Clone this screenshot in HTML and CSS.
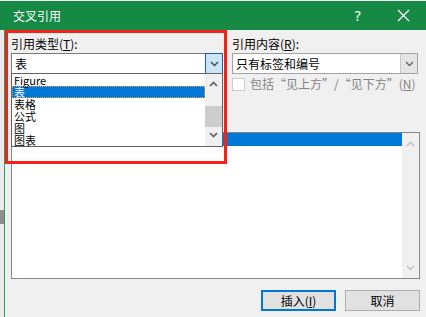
FILE: index.html
```html
<!DOCTYPE html>
<html lang="zh-CN">
<head>
    <meta charset="UTF-8">
    <meta name="viewport" content="width=device-width, initial-scale=1.0">
    <title>交叉引用</title>
    <link rel="stylesheet" href="styles.css">
</head>
<body>
    <div class="window">
        <div class="topline"></div>
        <div class="titlebar">
            <span class="title">交叉引用</span>
            <span class="help">?</span>
            <span class="close">
                <svg width="13" height="13" viewBox="0 0 13 13"><path d="M1 1L12 12M12 1L1 12" stroke="#fff" stroke-width="1.3" fill="none"/></svg>
            </span>
        </div>

        <div class="frame">
            <div class="sheet-edge"><div class="sheet-thumb"></div></div>

            <div class="dialog">
                <div class="columns">
                    <div class="col col-left">
                        <div class="field-label">引用类型(<u>T</u>):</div>
                        <div class="combo combo-focus">
                            <div class="combo-value">表</div>
                            <div class="combo-btn">
                                <svg width="9" height="6" viewBox="0 0 9 6"><path d="M1 1L4.5 4.5L8 1" stroke="#444" stroke-width="1.3" fill="none"/></svg>
                            </div>

                            <div class="dropdown">
                                <div class="drop-rows">
                                    <div class="drop-row">Figure</div>
                                    <div class="drop-row selected">表</div>
                                    <div class="drop-row">表格</div>
                                    <div class="drop-row">公式</div>
                                    <div class="drop-row">图</div>
                                    <div class="drop-row">图表</div>
                                </div>
                                <div class="drop-scroll">
                                    <svg class="arrow-up" width="9" height="6" viewBox="0 0 9 6"><path d="M1 5L4.5 1.5L8 5" stroke="#606060" stroke-width="1.6" fill="none"/></svg>
                                    <div class="drop-thumb"></div>
                                    <svg class="arrow-down" width="9" height="6" viewBox="0 0 9 6"><path d="M1 1L4.5 4.5L8 1" stroke="#606060" stroke-width="1.6" fill="none"/></svg>
                                </div>
                            </div>
                        </div>
                    </div>

                    <div class="col col-right">
                        <div class="field-label">引用内容(<u>R</u>):</div>
                        <div class="combo">
                            <div class="combo-value">只有标签和编号</div>
                            <div class="combo-btn combo-btn-plain">
                                <svg width="9" height="6" viewBox="0 0 9 6"><path d="M1 1L4.5 4.5L8 1" stroke="#606060" stroke-width="1.3" fill="none"/></svg>
                            </div>
                        </div>
                        <div class="check-row">
                            <span class="checkbox"></span>
                            <span class="check-label">包括“见上方”/“见下方”(<u>N</u>)</span>
                        </div>
                    </div>
                </div>

                <div class="ref-list">
                    <div class="ref-rows">
                        <div class="ref-row selected"></div>
                    </div>
                    <div class="ref-scroll">
                        <svg width="9" height="6" viewBox="0 0 9 6"><path d="M1 5L4.5 1.5L8 5" stroke="#c4c4c4" stroke-width="1.6" fill="none"/></svg>
                        <svg width="9" height="6" viewBox="0 0 9 6"><path d="M1 1L4.5 4.5L8 1" stroke="#c4c4c4" stroke-width="1.6" fill="none"/></svg>
                    </div>
                </div>

                <div class="buttons">
                    <button class="btn btn-default">插入(<u>I</u>)</button>
                    <button class="btn">取消</button>
                </div>
            </div>

            <div class="highlight"></div>
        </div>
    </div>
</body>
</html>
```

FILE: styles.css
```css
* {
    box-sizing: border-box;
}

body {
    margin: 0;
    background-color: #f0f0f0;
    font-family: "Noto Sans CJK SC", "Liberation Sans", sans-serif;
    font-size: 12px;
    color: #000;
}

.window {
    width: 426px;
    height: 317px;
    overflow: hidden;
    display: flex;
    flex-direction: column;
}

.topline {
    height: 1px;
    background-color: #f4f4f4;
}

.titlebar {
    height: 29px;
    display: flex;
    align-items: center;
    background-color: #168a45;
    color: #fff;
    padding-left: 13px;
}

.title {
    flex: 1;
    font-size: 12px;
    line-height: 14px;
}

.help {
    width: 12px;
    margin-right: 31px;
    font-family: "DejaVu Sans", sans-serif;
    font-size: 14px;
    line-height: 14px;
}

.close {
    display: flex;
    width: 13px;
    margin-right: 16px;
}

.frame {
    flex: 1;
    display: flex;
    position: relative;
}

.sheet-edge {
    width: 4px;
    background-color: #ececec;
    padding-top: 180px;
}

.sheet-thumb {
    height: 14px;
    background-color: #8e8e8e;
}

.dialog {
    flex: 1;
    border-left: 1px solid #21a25a;
    padding: 7px 6px 0 6px;
    display: flex;
    flex-direction: column;
}

.columns {
    display: flex;
    gap: 9px;
}

.col-left {
    width: 212px;
}

.col-right {
    width: 186px;
}

.field-label {
    height: 14px;
    line-height: 14px;
    margin-bottom: 2px;
    white-space: nowrap;
}

.combo {
    position: relative;
    display: flex;
    height: 21px;
    background-color: #fff;
    border: 1px solid #a3a3a3;
}

.combo-focus {
    border-color: #7a7a7a;
}

.combo-value {
    flex: 1;
    padding-left: 3px;
    line-height: 19px;
    white-space: nowrap;
}

.combo-btn {
    width: 18px;
    margin: -1px -1px -1px 0;
    display: flex;
    align-items: center;
    justify-content: center;
    background-color: #cce4f7;
    border: 1px solid #1c5f9c;
}

.combo-btn-plain {
    width: 17px;
    margin: 0;
    border: none;
    border-left: 1px solid #c8c8c8;
    background-color: #e5e5e5;
}

.dropdown {
    position: absolute;
    top: 19px;
    left: -1px;
    right: -1px;
    height: 74px;
    display: flex;
    background-color: #fff;
    border: 1px solid #646464;
    z-index: 2;
}

.drop-rows {
    flex: 1;
}

.drop-row {
    height: 12px;
    font-size: 11px;
    line-height: 12px;
    padding-left: 2px;
    white-space: nowrap;
}

.drop-row.selected {
    background-color: #0078d7;
    color: #fff;
    outline: 1px dotted #f0a040;
    outline-offset: -1px;
}

.drop-scroll {
    width: 17px;
    background-color: #f0f0f0;
    display: flex;
    flex-direction: column;
    align-items: center;
    padding-top: 7px;
}

.drop-thumb {
    width: 17px;
    height: 21px;
    margin-top: 19px;
    background-color: #cdcdcd;
}

.arrow-down {
    margin-top: 5px;
}

.check-row {
    display: flex;
    align-items: center;
    gap: 5px;
    margin-top: 3px;
    height: 14px;
    white-space: nowrap;
}

.checkbox {
    width: 13px;
    height: 13px;
    border: 1px solid #cccccc;
    background-color: #fff;
}

.check-label {
    color: #838383;
    line-height: 14px;
}

.ref-list {
    margin-top: 41px;
    height: 147px;
    display: flex;
    background-color: #fff;
    border: 1px solid #828790;
}

.ref-rows {
    flex: 1;
}

.ref-row {
    height: 13px;
}

.ref-row.selected {
    background-color: #0078d7;
}

.ref-scroll {
    width: 17px;
    background-color: #f0f0f0;
    display: flex;
    flex-direction: column;
    align-items: center;
    justify-content: space-between;
    padding: 8px 0 7px;
}

.buttons {
    display: flex;
    justify-content: flex-end;
    gap: 9px;
    margin-top: 11px;
}

.btn {
    width: 75px;
    height: 21px;
    padding: 0;
    font-family: inherit;
    font-size: 12px;
    line-height: 17px;
    color: #000;
    background-color: #e1e1e1;
    border: 1px solid #adadad;
}

.btn-default {
    border: 2px solid #0078d7;
}

.highlight {
    position: absolute;
    left: 5px;
    top: 0;
    width: 222px;
    height: 134px;
    border: 3px solid #f8211a;
    z-index: 3;
}
```
